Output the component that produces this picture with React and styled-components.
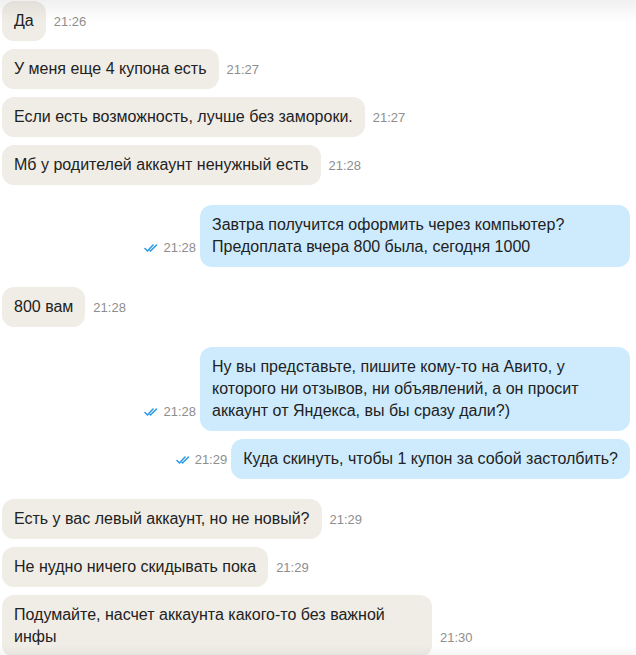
import React from 'react';
import styled, { createGlobalStyle } from 'styled-components';

const GlobalStyle = createGlobalStyle`
  html, body {
    margin: 0;
    padding: 0;
    background: #ffffff;
  }
  body {
    font-family: 'Liberation Sans', Arial, sans-serif;
    color: #1f1f1f;
  }
`;

const ChatWrapper = styled.div`
  position: relative;
  width: 636px;
  height: 655px;
  overflow: hidden;
  background: #ffffff;
`;

const Feed = styled.div`
  display: flex;
  flex-direction: column;
  padding: 1px 6px 0 2px;
`;

const Group = styled.div`
  display: flex;
  flex-direction: column;
  gap: 8px;
  margin-bottom: 20px;
`;

const Row = styled.div`
  display: flex;
  align-items: flex-end;
  flex-direction: ${p => (p.$mine ? 'row-reverse' : 'row')};
`;

const Bubble = styled.div`
  max-width: 406px;
  padding: 9px 12px 9px 12px;
  border-radius: 12px;
  font-size: 16px;
  line-height: 22px;
  background: ${p => (p.$mine ? '#cdebfd' : '#f0ede7')};
  color: #222;
`;

const Meta = styled.div`
  display: flex;
  align-items: center;
  gap: 4px;
  margin: ${p => (p.$mine ? '0 4px 12px 0' : '0 0 12px 8px')};
  font-size: 13px;
  line-height: 15px;
  color: #8e8e8e;
  white-space: nowrap;
`;

const Shade = styled.div`
  position: absolute;
  left: 0;
  right: 0;
  pointer-events: none;
  height: ${p => (p.$top ? '22px' : '10px')};
  ${p => (p.$top ? 'top: 0;' : 'bottom: 0;')}
  background: linear-gradient(
    ${p => (p.$top ? 'to bottom' : 'to top')},
    rgba(0, 0, 0, ${p => (p.$top ? 0.06 : 0.035)}),
    rgba(0, 0, 0, 0)
  );
`;

const Checks = () => (
  <svg width="15" height="10" viewBox="0 0 15 10" fill="none">
    <path d="M1 5.5 L3.5 8 L9 2" stroke="#2f9ae6" strokeWidth="1.6" strokeLinecap="round" strokeLinejoin="round" />
    <path d="M6 7.5 L6.5 8 L12.5 2" stroke="#2f9ae6" strokeWidth="1.6" strokeLinecap="round" strokeLinejoin="round" />
  </svg>
);

const groups = [
  {
    mine: false,
    items: [
      { text: 'Да', time: '21:26' },
      { text: 'У меня еще 4 купона есть', time: '21:27' },
      { text: 'Если есть возможность, лучше без замороки.', time: '21:27' },
      { text: 'Мб у родителей аккаунт ненужный есть', time: '21:28' }
    ]
  },
  {
    mine: true,
    items: [
      {
        text: 'Завтра получится оформить через компьютер? Предоплата вчера 800 была, сегодня 1000',
        time: '21:28'
      }
    ]
  },
  { mine: false, items: [{ text: '800 вам', time: '21:28' }] },
  {
    mine: true,
    items: [
      {
        text: 'Ну вы представьте, пишите кому-то на Авито, у которого ни отзывов, ни объявлений, а он просит аккаунт от Яндекса, вы бы сразу дали?)',
        time: '21:28'
      },
      { text: 'Куда скинуть, чтобы 1 купон за собой застолбить?', time: '21:29' }
    ]
  },
  {
    mine: false,
    items: [
      { text: 'Есть у вас левый аккаунт, но не новый?', time: '21:29' },
      { text: 'Не нудно ничего скидывать пока', time: '21:29' },
      { text: 'Подумайте, насчет аккаунта какого-то без важной инфы', time: '21:30' }
    ]
  }
];

const App = () => {
  return (
    <>
      <GlobalStyle />
      <ChatWrapper>
        <Feed>
          {groups.map((g, gi) => (
            <Group key={gi}>
              {g.items.map((m, mi) => (
                <Row key={mi} $mine={g.mine}>
                  <Bubble $mine={g.mine}>{m.text}</Bubble>
                  <Meta $mine={g.mine}>
                    {g.mine && <Checks />}
                    {m.time}
                  </Meta>
                </Row>
              ))}
            </Group>
          ))}
        </Feed>
        <Shade $top />
        <Shade />
      </ChatWrapper>
    </>
  );
};

export default App;
